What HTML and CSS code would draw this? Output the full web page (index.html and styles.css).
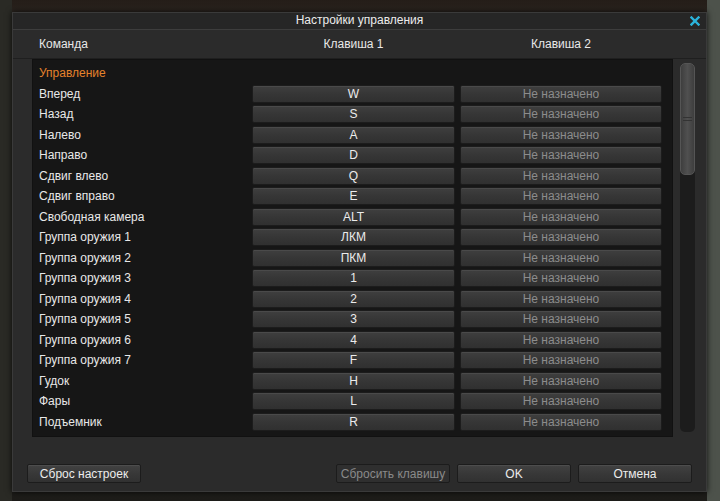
FILE: index.html
```html
<!DOCTYPE html>
<html lang="ru">
<head>
  <meta charset="UTF-8" />
  <title>Настройки управления</title>
  <link rel="stylesheet" href="styles.css">
</head>
<body>
  <div class="dialog">
    <div class="titlebar">
      Настройки управления
      <span class="close">
        <svg width="10" height="10" viewBox="0 0 10 10"><path d="M1.5 1.5 L8.5 8.5 M8.5 1.5 L1.5 8.5" stroke="#2bb4dc" stroke-width="2.4" stroke-linecap="square"/></svg>
      </span>
    </div>

    <div class="head">
      <span class="h-cmd">Команда</span>
      <span class="h-key">Клавиша 1</span>
      <span class="h-key">Клавиша 2</span>
    </div>

    <div class="content">
      <div class="list">
        <div class="row section"><span class="label">Управление</span></div>
        <div class="row"><span class="label">Вперед</span><button class="key">W</button><button class="key empty">Не назначено</button></div>
        <div class="row"><span class="label">Назад</span><button class="key">S</button><button class="key empty">Не назначено</button></div>
        <div class="row"><span class="label">Налево</span><button class="key">A</button><button class="key empty">Не назначено</button></div>
        <div class="row"><span class="label">Направо</span><button class="key">D</button><button class="key empty">Не назначено</button></div>
        <div class="row"><span class="label">Сдвиг влево</span><button class="key">Q</button><button class="key empty">Не назначено</button></div>
        <div class="row"><span class="label">Сдвиг вправо</span><button class="key">E</button><button class="key empty">Не назначено</button></div>
        <div class="row"><span class="label">Свободная камера</span><button class="key">ALT</button><button class="key empty">Не назначено</button></div>
        <div class="row"><span class="label">Группа оружия 1</span><button class="key">ЛКМ</button><button class="key empty">Не назначено</button></div>
        <div class="row"><span class="label">Группа оружия 2</span><button class="key">ПКМ</button><button class="key empty">Не назначено</button></div>
        <div class="row"><span class="label">Группа оружия 3</span><button class="key">1</button><button class="key empty">Не назначено</button></div>
        <div class="row"><span class="label">Группа оружия 4</span><button class="key">2</button><button class="key empty">Не назначено</button></div>
        <div class="row"><span class="label">Группа оружия 5</span><button class="key">3</button><button class="key empty">Не назначено</button></div>
        <div class="row"><span class="label">Группа оружия 6</span><button class="key">4</button><button class="key empty">Не назначено</button></div>
        <div class="row"><span class="label">Группа оружия 7</span><button class="key">F</button><button class="key empty">Не назначено</button></div>
        <div class="row"><span class="label">Гудок</span><button class="key">H</button><button class="key empty">Не назначено</button></div>
        <div class="row"><span class="label">Фары</span><button class="key">L</button><button class="key empty">Не назначено</button></div>
        <div class="row"><span class="label">Подъемник</span><button class="key">R</button><button class="key empty">Не назначено</button></div>
      </div>
      <div class="scrollbar">
        <div class="thumb"><span class="grip"></span></div>
      </div>
    </div>

    <div class="footer">
      <button class="btn">Сброс настроек</button>
      <span class="spacer"></span>
      <button class="btn disabled">Сбросить клавишу</button>
      <button class="btn">OK</button>
      <button class="btn">Отмена</button>
    </div>
  </div>
</body>
</html>
```

FILE: styles.css
```css
* {
  box-sizing: border-box;
}

body {
  margin: 0;
  width: 720px;
  height: 501px;
  overflow: hidden;
  font-family: "Liberation Sans", Arial, sans-serif;
  font-size: 12px;
  color: #e8e8e8;
  background:
    linear-gradient(90deg, #2a2a25 0, #2a2a25 12px, transparent 12px, transparent 707px, #4d524b 707px),
    linear-gradient(180deg, #241d18 0, #2a241f 12px, #1d1c19 100%);
  padding: 12px 0 0 12px;
}

.dialog {
  width: 695px;
  height: 480px;
  background: #2b2b2b;
  border: 1px solid #3a3a3a;
  box-shadow: 0 0 6px rgba(0, 0, 0, 0.8);
  display: flex;
  flex-direction: column;
}

.titlebar {
  position: relative;
  height: 17px;
  line-height: 15px;
  text-align: center;
  background: #262626;
  border-bottom: 1px solid #3d3d3d;
  color: #ececec;
}

.close {
  position: absolute;
  right: 6px;
  top: 3px;
  line-height: 0;
}

.head {
  display: grid;
  grid-template-columns: 213px 203px 5px 202px;
  height: 29px;
  align-items: center;
  padding-left: 26px;
  border-bottom: 1px solid #1f1f1f;
}

.head .h-key {
  text-align: center;
}

.head .h-key:last-child {
  grid-column: 4;
}

.content {
  display: flex;
  gap: 7px;
  margin-left: 19px;
  height: 378px;
}

.list {
  width: 641px;
  background: #161616;
  border: 1px solid #111;
  padding: 3px 11px 0 6px;
  overflow: hidden;
}

.row {
  display: grid;
  grid-template-columns: 208px 203px 202px;
  column-gap: 5px;
  height: 20.5px;
  align-items: center;
}

.row.section .label {
  color: #e5822c;
}

.key {
  height: 18px;
  padding: 0;
  font-family: inherit;
  font-size: 12px;
  color: #ececec;
  background: linear-gradient(180deg, #3f3f3f 0, #363636 50%, #303030 100%);
  border: 1px solid #1c1c1c;
  border-radius: 2px;
  box-shadow: inset 0 1px 0 #4a4a4a;
}

.key.empty {
  color: #8c8c8c;
}

.scrollbar {
  width: 15px;
  margin-top: 4px;
  height: 369px;
  background: #1c1c1c;
  border-radius: 5px;
}

.thumb {
  height: 112px;
  border-radius: 5px;
  background: linear-gradient(90deg, #3e3e3e, #505050 50%, #3e3e3e);
  border: 1px solid #555;
  display: flex;
  align-items: center;
  justify-content: center;
}

.grip {
  width: 9px;
  height: 4px;
  border-top: 1px solid #333;
  border-bottom: 1px solid #333;
}

.footer {
  display: flex;
  align-items: center;
  gap: 7px;
  padding: 19px 14px 0;
  flex: 1;
}

.spacer {
  flex: 1;
}

.btn {
  width: 114px;
  height: 19px;
  padding: 0;
  font-family: inherit;
  font-size: 12px;
  color: #ececec;
  background: linear-gradient(180deg, #424242 0, #383838 50%, #313131 100%);
  border: 1px solid #1c1c1c;
  border-radius: 2px;
  box-shadow: inset 0 1px 0 #4d4d4d;
}

.btn.disabled {
  color: #8a8a8a;
  background: #2f2f2f;
  box-shadow: none;
}
```
